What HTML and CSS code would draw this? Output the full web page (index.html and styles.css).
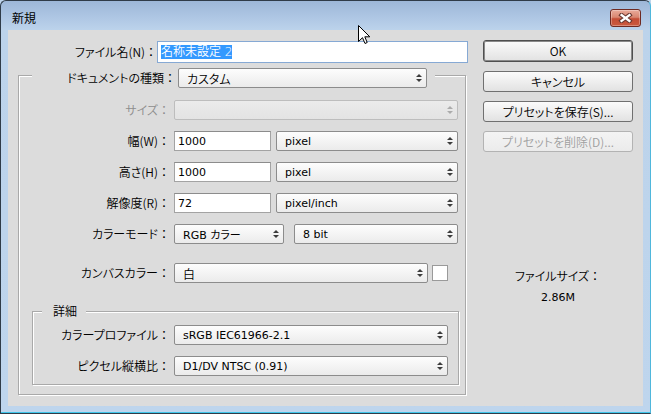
FILE: index.html
```html
<!DOCTYPE html>
<html lang="ja">
<head>
<meta charset="utf-8">
<title>新規</title>
<link rel="stylesheet" href="styles.css">
</head>
<body>
<div class="window">
  <div class="titlebar">
    <span class="title">新規</span>
    <div class="close">
      <svg width="15" height="10" viewBox="0 0 15 10"><path d="M3.5 2 L11.5 8 M11.5 2 L3.5 8" stroke="#6b3a33" stroke-width="4.4" stroke-linecap="square"/><path d="M3.5 2 L11.5 8 M11.5 2 L3.5 8" stroke="#ffffff" stroke-width="2.2" stroke-linecap="square"/></svg>
    </div>
  </div>
  <div class="client">
    <div class="form">
      <div class="name-row">
        <span class="lbl name-lbl">ファイル名(N)<span class="colon">：</span></span>
        <div class="field name-field"><span class="selected">名称未設定 2</span></div>
      </div>
      <div class="group outer">
        <div class="head doc-head">
          <span class="lbl doc-lbl">ドキュメントの種類<span class="colon">：</span></span>
          <div class="select w-doc"><span>カスタム</span><span class="arrows"><i></i><i></i></span></div>
        </div>
        <div class="row first">
          <span class="lbl disabled">サイズ<span class="colon">：</span></span>
          <div class="select disabled w-full"><span></span><span class="arrows"><i></i><i></i></span></div>
        </div>
        <div class="row">
          <span class="lbl">幅(W)<span class="colon">：</span></span>
          <div class="field w-num">1000</div>
          <div class="select w-unit">pixel<span class="arrows"><i></i><i></i></span></div>
        </div>
        <div class="row">
          <span class="lbl">高さ(H)<span class="colon">：</span></span>
          <div class="field w-num">1000</div>
          <div class="select w-unit">pixel<span class="arrows"><i></i><i></i></span></div>
        </div>
        <div class="row">
          <span class="lbl">解像度(R)<span class="colon">：</span></span>
          <div class="field w-num">72</div>
          <div class="select w-unit">pixel/inch<span class="arrows"><i></i><i></i></span></div>
        </div>
        <div class="row">
          <span class="lbl">カラーモード<span class="colon">：</span></span>
          <div class="select w-mode">RGB カラー<span class="arrows"><i></i><i></i></span></div>
          <div class="select w-bit">8 bit<span class="arrows"><i></i><i></i></span></div>
        </div>
        <div class="row canvas">
          <span class="lbl">カンバスカラー<span class="colon">：</span></span>
          <div class="select w-canvas">白<span class="arrows"><i></i><i></i></span></div>
          <div class="swatch"></div>
        </div>
        <div class="group inner">
          <div class="head inner-head">詳細</div>
          <div class="row first">
            <span class="lbl">カラープロファイル<span class="colon">：</span></span>
            <div class="select w-prof">sRGB IEC61966-2.1<span class="arrows"><i></i><i></i></span></div>
          </div>
          <div class="row">
            <span class="lbl">ピクセル縦横比<span class="colon">：</span></span>
            <div class="select w-prof">D1/DV NTSC (0.91)<span class="arrows"><i></i><i></i></span></div>
          </div>
        </div>
      </div>
    </div>
    <div class="side">
      <div class="btn default">OK</div>
      <div class="btn">キャンセル</div>
      <div class="btn">プリセットを保存(S)...</div>
      <div class="btn off">プリセットを削除(D)...</div>
      <div class="fsize">
        <div>ファイルサイズ<span class="colon">：</span></div>
        <div class="num">2.86M</div>
      </div>
    </div>
  </div>
  <svg class="cursor" width="13" height="20" viewBox="0 0 13 20"><path d="M0.5 0.5 V16.5 L4.5 12.7 L7 18.5 L9.2 17.5 L6.8 11.8 H11.8 Z" fill="#ffffff" stroke="#000000" stroke-width="1" stroke-linejoin="miter"/></svg>
</div>
</body>
</html>
```

FILE: styles.css
```css
* { box-sizing: border-box; }
html, body { margin: 0; padding: 0; }
body {
  width: 651px;
  height: 414px;
  overflow: hidden;
  background: #bed4ec;
  font-family: "Noto Sans CJK JP", sans-serif;
  font-size: 12px;
  font-weight: 350;
  font-feature-settings: "palt" 1;
  color: #000;
}
.colon { font-feature-settings: normal; }
.window {
  position: relative;
  width: 651px;
  height: 414px;
  display: flex;
  flex-direction: column;
  padding: 0 7px 7px 7px;
  border: 1px solid #2f3b48;
  border-right-color: #4fb7dc;
  border-radius: 6px 6px 0 0;
  background: linear-gradient(to bottom, #9db7d8 0px, #b0c8e5 18px, #bcd3eb 29px, #bed5ed 100%);
  box-shadow: inset 0 -1px 0 #3fc6ea;
}
.titlebar {
  height: 29px;
  display: flex;
  align-items: flex-start;
}
.title {
  margin: 9px 0 0 4px;
  line-height: 16px;
  font-size: 12px;
  font-weight: 400;
}
.close {
  margin: 8px 2px 0 auto;
  width: 31px;
  height: 18px;
  border: 1px solid #6e2a22;
  border-radius: 3px;
  background: linear-gradient(#e9aa9a 0%, #d98771 45%, #c44d35 55%, #cb5a3f 100%);
  box-shadow: inset 0 0 0 1px rgba(255, 255, 255, 0.3);
  display: flex;
  align-items: center;
  justify-content: center;
}
.client {
  flex: 1;
  background: #dcdcdc;
  display: flex;
  padding-top: 10px;
}
.form { width: 467px; }
.lbl { white-space: nowrap; line-height: 16px; }
.lbl.disabled { color: #8d8d8d; }

.name-row {
  display: flex;
  align-items: center;
  height: 22px;
  margin-top: 1px;
}
.name-lbl { width: 149px; text-align: right; }
.field {
  height: 20px;
  border: 1px solid #a3a3a3;
  border-top-color: #8c8c8c;
  background: #fff;
  padding-left: 3px;
  display: flex;
  align-items: center;
  font-family: "DejaVu Sans", "Noto Sans CJK JP", sans-serif;
  font-size: 11px;
  font-weight: 400;
}
.name-field {
  width: 311px;
  height: 22px;
  border-color: #86a9d4;
}
.selected {
  background: #3399ff;
  color: #fff;
  font-family: "DejaVu Sans", "Noto Sans CJK JP", sans-serif;
  font-weight: 350;
  font-size: 12px;
  line-height: 14px;
}

.group {
  border: 1px solid #a9a9a9;
  box-shadow: inset 1px 1px 0 #fff, 1px 1px 0 #fff;
}
.outer {
  margin: 12px 0 0 10px;
  width: 448px;
  padding-bottom: 9px;
}
.head { background: #dcdcdc; }
.doc-head {
  display: flex;
  align-items: center;
  margin: -8px 0 0 13px;
  width: 403px;
  height: 20px;
  padding-right: 8px;
}
.doc-lbl { flex: 1; text-align: right; margin-right: 2px; }

.row {
  display: flex;
  align-items: center;
  height: 20px;
  margin-top: 11px;
}
.row.first { margin-top: 12px; }
.row.canvas { margin-top: 19px; }
.row .lbl { width: 151px; text-align: right; margin-right: 4px; }

.inner {
  margin: 28px 0 0 13px;
  width: 427px;
  padding-bottom: 8px;
}
.inner-head {
  width: fit-content;
  margin: -8px 0 0 9px;
  padding: 0 9px 0 11px;
  height: 14px;
  line-height: 14px;
}
.inner .row.first { margin-top: 7px; }
.inner .row .lbl { width: 137px; }

.select {
  display: flex;
  align-items: center;
  justify-content: space-between;
  height: 20px;
  border: 1px solid #8c8c8c;
  border-radius: 2px;
  background: linear-gradient(#fdfdfd, #ebebeb);
  padding: 0 4px 0 8px;
  font-family: "DejaVu Sans", "Noto Sans CJK JP", sans-serif;
  font-size: 11px;
  font-weight: 400;
  white-space: nowrap;
}
.select.disabled {
  border-color: #bdbdbd;
  background: linear-gradient(#ebebeb, #e3e3e3);
}
.arrows {
  display: flex;
  flex-direction: column;
  gap: 2px;
}
.arrows i {
  display: block;
  width: 0;
  height: 0;
  border-left: 3px solid transparent;
  border-right: 3px solid transparent;
}
.arrows i:first-child { border-bottom: 3px solid #3c3c3c; }
.arrows i:last-child { border-top: 3px solid #3c3c3c; }
.select.disabled .arrows i:first-child { border-bottom-color: #ababab; }
.select.disabled .arrows i:last-child { border-top-color: #ababab; }

.w-doc { width: 249px; font-family: "Noto Sans CJK JP", sans-serif; font-size: 12px; font-weight: 350; }
.w-full { width: 284px; }
.w-num { width: 97px; }
.w-unit { width: 182px; margin-left: 5px; }
.w-mode { width: 110px; }
.w-bit { width: 164px; margin-left: 10px; }
.w-canvas { width: 254px; font-family: "Noto Sans CJK JP", sans-serif; font-size: 12px; font-weight: 350; }
.w-prof { width: 274px; }
.swatch {
  width: 16px;
  height: 16px;
  margin-left: 4px;
  background: #fff;
  border: 1px solid #9a9a9a;
}

.side {
  width: 150px;
  margin-left: 8px;
  display: flex;
  flex-direction: column;
}
.btn {
  height: 21px;
  margin-top: 9px;
  border: 1px solid #707070;
  border-radius: 3px;
  background: linear-gradient(#fbfbfb, #e2e2e2);
  display: flex;
  align-items: center;
  justify-content: center;
  line-height: 16px;
  white-space: nowrap;
}
.btn.default {
  margin-top: 0;
  height: 22px;
  border-color: #4f4f4f;
  box-shadow: inset 0 0 0 1px #8a8a8a;
}
.btn.off {
  border-color: #b3b3b3;
  color: #a0a0a0;
  background: linear-gradient(#f4f4f4, #ebebeb);
}
.fsize {
  margin-top: 113px;
  text-align: center;
  line-height: 22px;
}
.fsize .num {
  font-family: "DejaVu Sans", sans-serif;
  font-size: 11px;
  font-weight: 400;
}
.cursor {
  position: absolute;
  left: 357px;
  top: 24px;
}
```
